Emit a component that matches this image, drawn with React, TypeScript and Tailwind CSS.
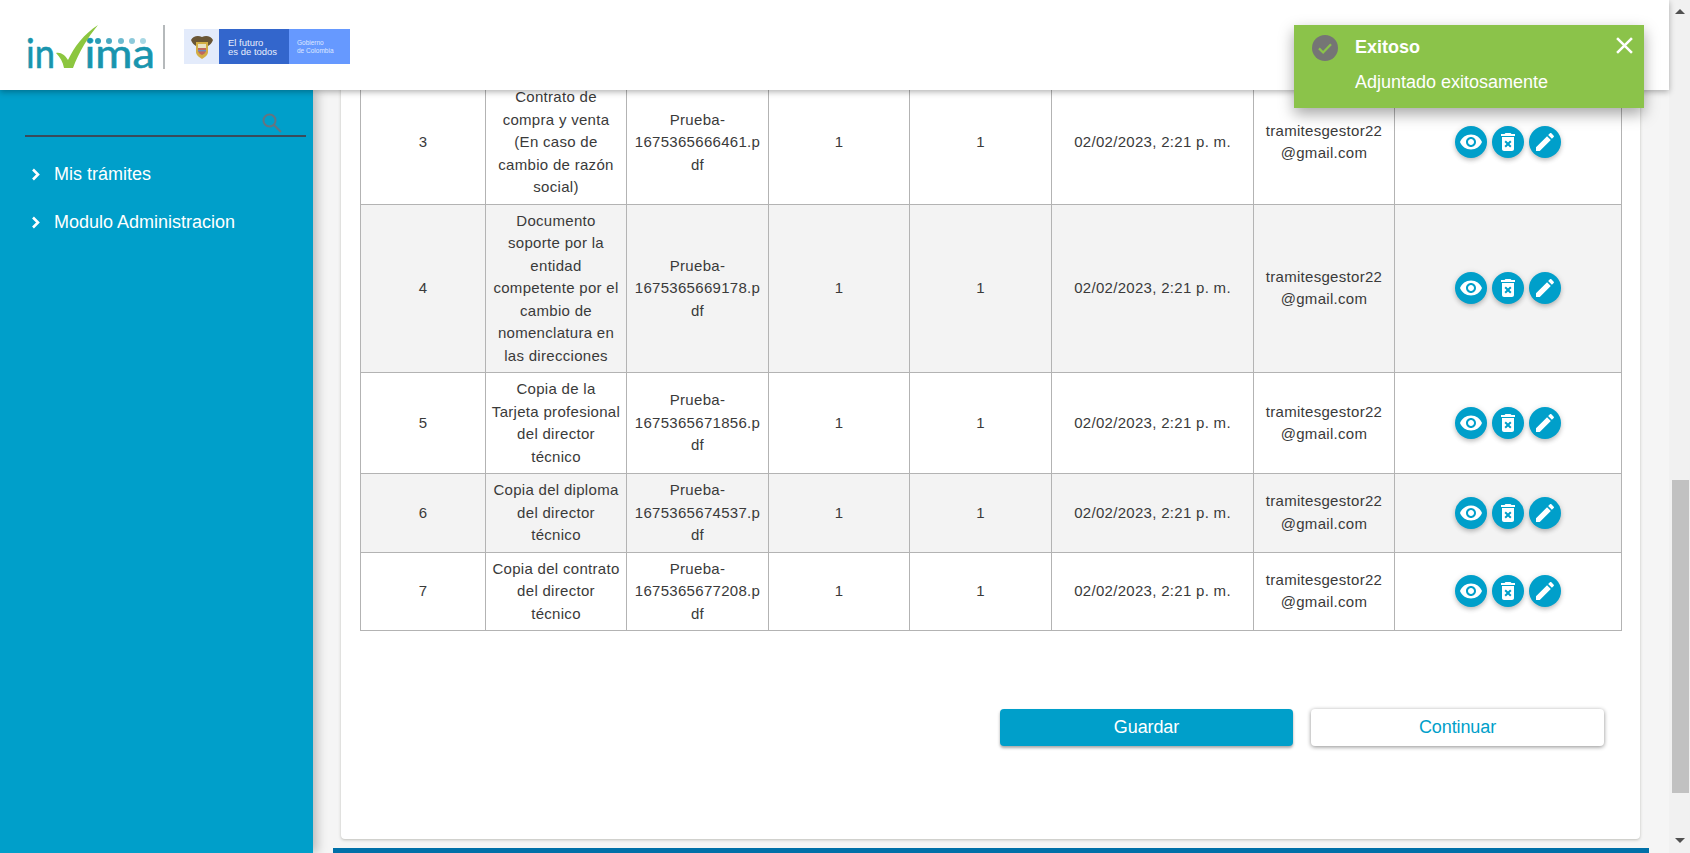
import React from "react";

const rows = [
  { n: "3", doc: "Contrato de compra y venta (En caso de cambio de razón social)", file: "Prueba-1675365666461.pdf" },
  { n: "4", doc: "Documento soporte por la entidad competente por el cambio de nomenclatura en las direcciones", file: "Prueba-1675365669178.pdf" },
  { n: "5", doc: "Copia de la Tarjeta profesional del director técnico", file: "Prueba-1675365671856.pdf" },
  { n: "6", doc: "Copia del diploma del director técnico", file: "Prueba-1675365674537.pdf" },
  { n: "7", doc: "Copia del contrato del director técnico", file: "Prueba-1675365677208.pdf" },
];

function Round({ d }: { d: string }) {
  return (
    <button className="flex h-8 w-8 items-center justify-center rounded-full bg-[#009fca] shadow-[0_3px_5px_-1px_rgba(0,0,0,0.2),0_1px_6px_0_rgba(0,0,0,0.14)]">
      <svg viewBox="0 0 24 24" className="h-6 w-6 fill-white">
        <path d={d} />
      </svg>
    </button>
  );
}

const EYE = "M12 4.5C7 4.5 2.73 7.61 1 12c1.73 4.39 6 7.5 11 7.5s9.27-3.11 11-7.5c-1.73-4.39-6-7.5-11-7.5zM12 17c-2.76 0-5-2.24-5-5s2.24-5 5-5 5 2.24 5 5-2.24 5-5 5zm0-8c-1.66 0-3 1.34-3 3s1.34 3 3 3 3-1.34 3-3-1.34-3-3-3z";
const BIN = "M6 19c0 1.1.9 2 2 2h8c1.1 0 2-.9 2-2V7H6v12zm2.46-7.12l1.41-1.41L12 12.59l2.12-2.12 1.41 1.41L13.41 14l2.12 2.12-1.41 1.41L12 15.41l-2.12 2.12-1.41-1.41L10.59 14l-2.13-2.12zM15.5 4l-1-1h-5l-1 1H5v2h14V4z";
const PEN = "M3 17.25V21h3.75L17.81 9.94l-3.75-3.75L3 17.25zM20.71 7.04c.39-.39.39-1.02 0-1.41l-2.34-2.34c-.39-.39-1.02-.39-1.41 0l-1.83 1.83 3.75 3.75 1.83-1.83z";

function Logo() {
  return (
    <svg viewBox="0 0 130 54" className="mt-[14px] h-[54px] w-[130px]">
      <text x="0" y="43" fontFamily="Lato, sans-serif" fontSize="40" fill="#1995ae" stroke="#1995ae" strokeWidth="0.6" textLength="29" lengthAdjust="spacingAndGlyphs">in</text>
      <text x="58.5" y="43" fontFamily="Lato, sans-serif" fontSize="40" fill="#1995ae" stroke="#1995ae" strokeWidth="0.6" textLength="70.5" lengthAdjust="spacingAndGlyphs">ima</text>
      <path d="M30 28 C35 27 39 30 42 35 C48 22 58 9 72 0 C62 12 53 27 47 43 L38 43 C37 37 34 32 30 28 Z" fill="#8cc63f" />
      <circle cx="72" cy="16" r="3" fill="#2a9db6" />
      <circle cx="83" cy="16" r="3" fill="#4aa9c2" />
      <circle cx="95" cy="16" r="3" fill="#6dbbd0" />
      <circle cx="106" cy="16" r="3" fill="#8cc9da" />
      <circle cx="117" cy="16" r="3" fill="#a8d8e4" />
    </svg>
  );
}

function Shield() {
  return (
    <svg viewBox="0 0 24 26" className="h-[26px] w-[24px]">
      <path d="M1 6 C3 2 8 1 12 3 C16 1 21 2 23 6 C22 9 20 11 18 12 L6 12 C4 11 2 9 1 6 Z" fill="#6a5636" />
      <path d="M6 8 H18 V18 C18 21 15 23 12 25 C9 23 6 21 6 18 Z" fill="#d2ae45" />
      <rect x="8" y="10" width="8" height="4" fill="#e9e2c4" />
      <path d="M8 14 H16 V17 C15.5 19 14 20 12 21 C10 20 8.5 19 8 17 Z" fill="#c0675c" />
      <rect x="8" y="16" width="8" height="1.4" fill="#6a8cc0" />
    </svg>
  );
}

export default function App() {
  return (
    <div className="flex h-[853px] w-[1690px] overflow-hidden bg-[#f1f1f1] font-['Liberation_Sans',Arial,sans-serif] text-[#3a3a3a]">
      <div className="relative flex w-[1669px] flex-col bg-[#f5f5f5]">
        <header className="relative z-20 flex h-[90px] shrink-0 items-center bg-white pl-[26px] shadow-[0_2px_6px_rgba(0,0,0,0.3)]">
          <Logo />
          <div className="ml-[7px] mr-[19px] mt-[4px] h-[44px] w-[2px] bg-[#b5b9bb]" />
          <div className="mt-[3px] flex h-[35px] w-[166px]">
            <div className="flex w-[35px] items-center justify-center bg-[#e3ebfb]">
              <Shield />
            </div>
            <div className="flex w-[70px] items-center bg-[#3366cc] pl-[9px] text-[9.5px] leading-[9px] text-[#e8eefc]">
              <span className="whitespace-nowrap">El futuro<br />es de todos</span>
            </div>
            <div className="flex w-[61px] items-center bg-[#6699ff] pl-[8px] text-[6.5px] leading-[7.5px] text-[#dfe8ff]">
              <span className="whitespace-nowrap">Gobierno<br />de Colombia</span>
            </div>
          </div>
        </header>

        <div className="flex min-h-0 flex-1">
          <aside className="relative z-10 w-[313px] shrink-0 bg-[#009fca] pl-[25px] pr-[7px] pt-[19px] shadow-[4px_0_10px_rgba(0,0,0,0.25)]">
            <div className="flex h-[28px] justify-end border-b-2 border-[#3a4a5a] pr-[24px]">
              <svg viewBox="0 0 20 20" className="mt-[4px] h-[20px] w-[20px] fill-none stroke-[#667480] stroke-2">
                <circle cx="7.5" cy="7.5" r="6" />
                <path d="M12 12l7 7" />
              </svg>
            </div>
            <nav className="mt-[13px] flex flex-col text-[18px] text-white">
              {["Mis trámites", "Modulo Administracion"].map((t) => (
                <div key={t} className="flex h-[48.5px] items-center">
                  <svg viewBox="0 0 10 13" className="ml-[6px] mr-[13px] h-[13px] w-[10px] fill-none stroke-white stroke-[2.6]">
                    <path d="M2 1.5l5 5-5 5" />
                  </svg>
                  <span>{t}</span>
                </div>
              ))}
            </nav>
          </aside>

          <main className="relative min-w-0 flex-1 overflow-hidden pl-[28px] pr-[29px]">
            <div className="-mt-[10px] h-[759px] rounded-b bg-white pl-[19px] pr-[18px] shadow-[0_1px_3px_rgba(60,60,40,0.3)]">
              <table className="w-[1261px] table-fixed border-collapse text-center text-[15px] leading-[22.5px] tracking-[0.3px]">
                <colgroup>
                  <col className="w-[125px]" />
                  <col className="w-[141px]" />
                  <col className="w-[142px]" />
                  <col className="w-[141px]" />
                  <col className="w-[142px]" />
                  <col className="w-[202px]" />
                  <col className="w-[141px]" />
                  <col className="w-[227px]" />
                </colgroup>
                <tbody>
                  {rows.map((r, i) => (
                    <tr key={r.n} className={i % 2 === 1 ? "bg-[#f3f3f3]" : "bg-white"}>
                      <td className="border border-[#b3b3b3] px-[7px] py-[5px]">{r.n}</td>
                      <td className="border border-[#b3b3b3] px-[5px] py-[5px]">{r.doc}</td>
                      <td className="border border-[#b3b3b3] px-[7px] py-[5px] [overflow-wrap:anywhere]">{r.file}</td>
                      <td className="border border-[#b3b3b3] px-[7px] py-[5px]">1</td>
                      <td className="border border-[#b3b3b3] px-[7px] py-[5px]">1</td>
                      <td className="border border-[#b3b3b3] px-[7px] py-[5px]">02/02/2023, 2:21 p. m.</td>
                      <td className="border border-[#b3b3b3] px-[7px] py-[5px] [overflow-wrap:anywhere]">tramitesgestor22@gmail.com</td>
                      <td className="border border-[#b3b3b3] px-[7px] py-[5px]">
                        <div className="flex justify-center gap-[5px]">
                          <Round d={EYE} />
                          <Round d={BIN} />
                          <Round d={PEN} />
                        </div>
                      </td>
                    </tr>
                  ))}
                </tbody>
              </table>
              <div className="mt-[78px] flex justify-end gap-[18px] pr-[18px]">
                <button className="h-[37px] w-[293px] rounded bg-[#009fca] text-[18px] tracking-[-0.1px] text-white shadow-[0_2px_3px_rgba(0,0,0,0.35)]">Guardar</button>
                <button className="h-[37px] w-[293px] rounded bg-white text-[18px] tracking-[-0.1px] text-[#009fca] shadow-[0_1px_4px_rgba(0,0,0,0.45)]">Continuar</button>
              </div>
            </div>
            <div className="mt-[9px] -ml-[8px] -mr-[9px] h-[5px] bg-[#0070a8]" />
          </main>
        </div>

        <div className="absolute left-[1294px] top-[25px] z-30 flex h-[83px] w-[350px] bg-[#8bc34a] text-white shadow-[0_6px_14px_rgba(0,0,0,0.35)]">
          <div className="ml-[18px] mt-[10px] flex h-[26px] w-[26px] items-center justify-center rounded-full bg-[#757575]">
            <svg viewBox="0 0 24 24" className="h-[18px] w-[18px] fill-none stroke-[#8bc34a] stroke-[3]">
              <path d="M4 12.5l5.5 5.5L20 7" />
            </svg>
          </div>
          <div className="ml-[17px] flex-1">
            <div className="mt-[9px] text-[18px] font-bold leading-[26px]">Exitoso</div>
            <div className="mt-[9px] text-[18px] leading-[26px]">Adjuntado exitosamente</div>
          </div>
          <svg viewBox="0 0 16 16" className="mr-[11px] mt-[12px] h-[17px] w-[17px] fill-none stroke-white stroke-[2.4]">
            <path d="M1 1l14 14M15 1L1 15" />
          </svg>
        </div>
      </div>

      <div className="flex w-[21px] flex-col items-center bg-[#f1f1f1] pl-px">
        <div className="mt-[9px] h-0 w-0 border-x-[5px] border-b-[5px] border-x-transparent border-b-[#505050]" />
        <div className="mt-[466px] h-[313px] w-[17px] bg-[#c1c1c1]" />
        <div className="mt-[45px] h-0 w-0 border-x-[5px] border-t-[5px] border-x-transparent border-t-[#505050]" />
      </div>
    </div>
  );
}
